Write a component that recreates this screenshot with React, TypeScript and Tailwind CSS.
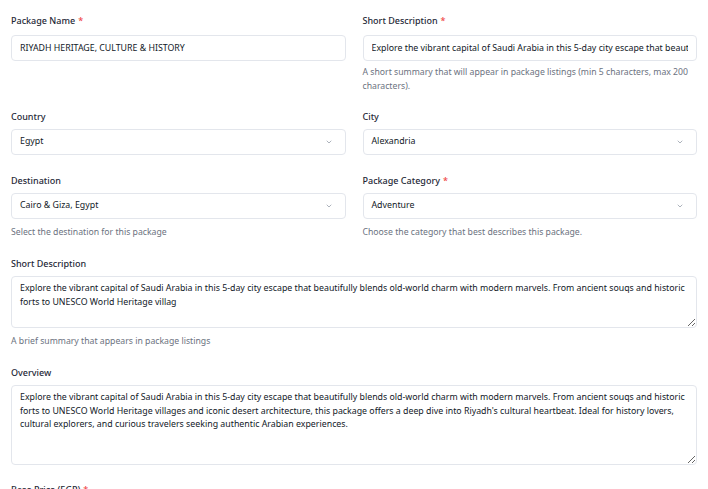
import React from "react";

const font = { fontFamily: '"Noto Sans", "Open Sans", sans-serif' };

function Label({ children, req }: { children: React.ReactNode; req?: boolean }) {
  return (
    <div className="text-[9px] leading-[13px] font-medium text-[#1f2937] mb-[6px]">
      {children}
      {req && <span className="text-[#ef4444] ml-[3px]">*</span>}
    </div>
  );
}

function Helper({ children, mt = "mt-[4px]" }: { children: React.ReactNode; mt?: string }) {
  return <div className={`text-[8.7px] leading-[14px] text-[#6b7280] ${mt}`}>{children}</div>;
}

function Select({ value }: { value: string }) {
  return (
    <div className="h-[26px] rounded-[4px] border border-[#e3e6ec] bg-white flex items-center justify-between pl-[8px] pr-[12px] text-[8.8px] text-[#111827]">
      <span>{value}</span>
      <svg width="8" height="8" viewBox="0 0 24 24" fill="none" stroke="#9ca3af" strokeWidth="2.5" strokeLinecap="round" strokeLinejoin="round">
        <path d="m6 9 6 6 6-6" />
      </svg>
    </div>
  );
}

function TextInput({ value }: { value: string }) {
  return (
    <input
      readOnly
      value={value}
      className="w-full h-[26px] rounded-[4px] border border-[#e3e6ec] bg-white px-[8px] text-[8.8px] text-[#111827] outline-none"
      style={font}
    />
  );
}

function TextArea({ value, h }: { value: string; h: string }) {
  return (
    <textarea
      readOnly
      value={value}
      className={`w-full block rounded-[4px] border border-[#e3e6ec] bg-white px-[8px] py-[5px] text-[8.8px] leading-[13.5px] text-[#111827] outline-none resize-y ${h}`}
      style={font}
    />
  );
}

export default function App() {
  const overview =
    "Explore the vibrant capital of Saudi Arabia in this 5-day city escape that beautifully blends old-world charm with modern marvels. From ancient souqs and historic forts to UNESCO World Heritage villages and iconic desert architecture, this package offers a deep dive into Riyadh's cultural heartbeat. Ideal for history lovers, cultural explorers, and curious travelers seeking authentic Arabian experiences.";
  const short =
    "Explore the vibrant capital of Saudi Arabia in this 5-day city escape that beautifully blends old-world charm with modern marvels. From ancient souqs and historic forts to UNESCO World Heritage villag";
  return (
    <div className="w-[708px] h-[489px] overflow-hidden bg-white px-[11px] pt-[14px]" style={font}>
      <div className="grid grid-cols-2 gap-x-[17px]">
        <div>
          <Label req>Package Name</Label>
          <TextInput value="RIYADH HERITAGE, CULTURE & HISTORY" />
        </div>
        <div>
          <Label req>Short Description</Label>
          <TextInput value="Explore the vibrant capital of Saudi Arabia in this 5-day city escape that beautifully blends old-world charm" />
          <Helper>A short summary that will appear in package listings (min 5 characters, max 200 characters).</Helper>
        </div>
      </div>
      <div className="grid grid-cols-2 gap-x-[17px] mt-[17px]">
        <div>
          <Label>Country</Label>
          <Select value="Egypt" />
        </div>
        <div>
          <Label>City</Label>
          <Select value="Alexandria" />
        </div>
      </div>
      <div className="grid grid-cols-2 gap-x-[17px] mt-[19px]">
        <div>
          <Label>Destination</Label>
          <Select value="Cairo & Giza, Egypt" />
          <Helper mt="mt-[6px]">Select the destination for this package</Helper>
        </div>
        <div>
          <Label req>Package Category</Label>
          <Select value="Adventure" />
          <Helper mt="mt-[6px]">Choose the category that best describes this package.</Helper>
        </div>
      </div>
      <div className="mt-[18px]">
        <Label>Short Description</Label>
        <TextArea value={short} h="h-[52px]" />
        <Helper mt="mt-[6px]">A brief summary that appears in package listings</Helper>
      </div>
      <div className="mt-[18px]">
        <Label>Overview</Label>
        <TextArea value={overview} h="h-[80px]" />
      </div>
      <div className="mt-[18px]">
        <Label req>Base Price (EGP)</Label>
      </div>
    </div>
  );
}
